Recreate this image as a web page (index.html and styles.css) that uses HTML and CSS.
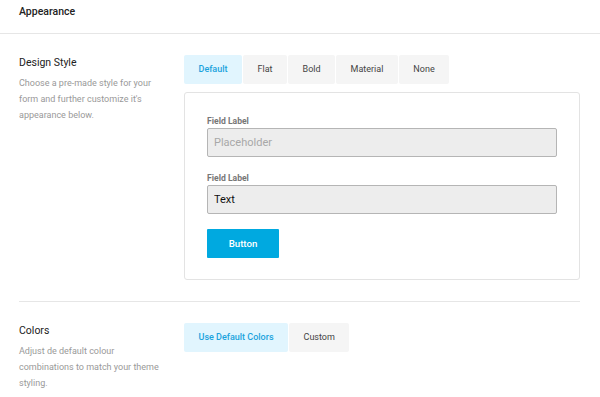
FILE: index.html
```html
<!DOCTYPE html>
<html lang="en">
<head>
    <meta charset="UTF-8">
    <meta name="viewport" content="width=device-width, initial-scale=1.0">
    <title>Appearance</title>
    <link rel="stylesheet" href="styles.css">
</head>
<body>
    <!-- Header -->
    <div class="header">Appearance</div>

    <div class="content">
        <!-- Design style -->
        <div class="section">
            <div class="info">
                <h2>Design Style</h2>
                <p>Choose a pre-made style for your form and further customize it's appearance below.</p>
            </div>
            <div class="options">
                <div class="tabs">
                    <a class="tab active" href="#">Default</a>
                    <a class="tab" href="#">Flat</a>
                    <a class="tab" href="#">Bold</a>
                    <a class="tab" href="#">Material</a>
                    <a class="tab" href="#">None</a>
                </div>
                <div class="preview">
                    <label class="field-label">Field Label</label>
                    <input class="field" type="text" placeholder="Placeholder">
                    <label class="field-label">Field Label</label>
                    <input class="field" type="text" value="Text">
                    <button class="btn">Button</button>
                </div>
            </div>
        </div>

        <!-- Colors -->
        <div class="section">
            <div class="info">
                <h2>Colors</h2>
                <p>Adjust de default colour combinations to match your theme styling.</p>
            </div>
            <div class="options">
                <div class="tabs">
                    <a class="tab active" href="#">Use Default Colors</a>
                    <a class="tab" href="#">Custom</a>
                </div>
            </div>
        </div>
    </div>
</body>
</html>
```

FILE: styles.css
```css
body {
    font-family: Roboto, "Noto Sans", Arial, sans-serif;
    margin: 0;
    padding: 0;
    background-color: #fff;
    color: #222;
}

.header {
    height: 29px;
    padding: 4px 19px 0;
    font-size: 10.5px;
    font-weight: 500;
    line-height: 16px;
    border-bottom: 1px solid #e6e6e6;
}

.content {
    padding: 0 20px 0 19px;
}

.section {
    display: flex;
    padding: 21px 0 21px;
    border-bottom: 1px solid #e6e6e6;
}

.section:last-child {
    border-bottom: none;
}

.info {
    width: 165px;
    flex-shrink: 0;
}

.info h2 {
    margin: 0;
    font-size: 10.5px;
    font-weight: 400;
    line-height: 16px;
    color: #222;
}

.info p {
    margin: 4px 0 0;
    width: 146px;
    font-size: 9px;
    line-height: 16px;
    color: #999;
}

.options {
    flex-grow: 1;
}

.tabs {
    display: flex;
    gap: 1px;
}

.tab {
    display: block;
    height: 29px;
    line-height: 29px;
    padding: 0 14.5px;
    background-color: #f5f5f5;
    color: #444;
    font-size: 9px;
    text-decoration: none;
    border-radius: 2px;
}

.tab.active {
    background-color: #e1f5fe;
    color: #1ba3dd;
    font-weight: 500;
}

.preview {
    margin-top: 8px;
    padding: 23px 22px 21px 22px;
    border: 1px solid #e3e3e3;
    border-radius: 3px;
}

.field-label {
    display: block;
    font-size: 8.6px;
    font-weight: 700;
    line-height: 10px;
    color: #777;
    margin-bottom: 2px;
}

.field {
    display: block;
    box-sizing: border-box;
    width: 100%;
    height: 29px;
    margin: 0 0 16px;
    padding: 0 6px;
    background-color: #ededed;
    border: 1px solid #b5b5b5;
    border-radius: 2px;
    font-family: inherit;
    font-size: 11px;
    color: #111;
}

.field::placeholder {
    color: #a8a8a8;
}

.btn {
    display: block;
    width: 72px;
    height: 29px;
    margin-top: -1px;
    background-color: #00a9e0;
    color: white;
    border: none;
    border-radius: 1px;
    font-family: inherit;
    font-size: 9.7px;
    font-weight: 500;
    cursor: pointer;
}
```
